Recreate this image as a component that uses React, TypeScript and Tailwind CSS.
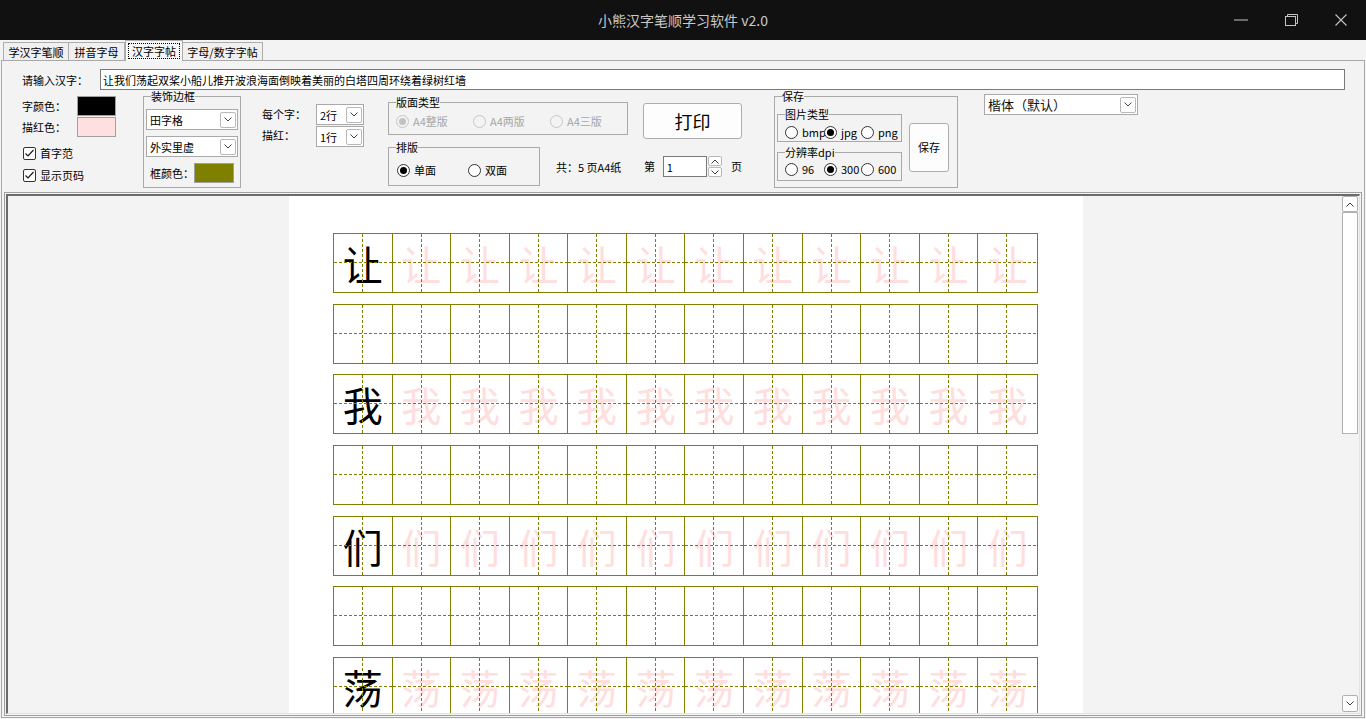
import React from "react";

const rows = ["让", "", "我", "", "们", "", "荡"];

const Chevron = ({ up = false }: { up?: boolean }) => (
  <svg width="8" height="5" viewBox="0 0 8 5" fill="none">
    <path d={up ? "M0.5 4.5 L4 1 L7.5 4.5" : "M0.5 0.5 L4 4 L7.5 0.5"} stroke="#404040" strokeWidth="1" />
  </svg>
);

const Select = ({ value, className, textClass = "" }: { value: string; className: string; textClass?: string }) => (
  <div className={`flex items-center bg-white border border-[#a9a9a9] pl-[3px] pr-[1px] ${className}`}>
    <span className={`flex-1 whitespace-nowrap leading-[14px] ${textClass}`}>{value}</span>
    <span className="w-[16px] h-[16px] flex items-center justify-center border border-[#b8b8b8] rounded-[2px] bg-white">
      <Chevron />
    </span>
  </div>
);

const Radio = ({ label, checked = false, disabled = false, className = "" }: { label: string; checked?: boolean; disabled?: boolean; className?: string }) => (
  <div className={`flex items-center h-[14px] ${className}`}>
    <span
      className={`w-[13px] h-[13px] shrink-0 rounded-full border flex items-center justify-center ${
        disabled ? "border-[#c6c6c6] bg-[#f3f3f3]" : "border-[#333333] bg-white"
      }`}
    >
      {checked && <span className={`w-[7px] h-[7px] rounded-full ${disabled ? "bg-[#c2c2c2]" : "bg-black"}`} />}
    </span>
    <span className={`ml-[4px] whitespace-nowrap leading-[14px] ${disabled ? "text-[#a6a6a6]" : ""}`}>{label}</span>
  </div>
);

const Check = ({ label }: { label: string }) => (
  <div className="flex items-center h-[16px]">
    <span className="ml-[1px] w-[13px] h-[13px] flex items-center justify-center border border-[#333333] rounded-[2px] bg-white">
      <svg width="11" height="11" viewBox="0 0 11 11" fill="none">
        <path d="M1.5 5.5 L4 8 L9.5 2" stroke="#1a1a1a" strokeWidth="1.2" />
      </svg>
    </span>
    <span className="ml-[4px] leading-[14px]">{label}</span>
  </div>
);

const Group = ({ title, className, children }: { title: string; className: string; children?: React.ReactNode }) => (
  <fieldset className={`border border-[#a9a9a9] ${className}`}>
    <legend className="ml-[7px] leading-[14px]">{title}</legend>
    {children}
  </fieldset>
);

const Cell = ({ ch, first }: { ch: string; first: boolean }) => (
  <div className="relative flex items-center justify-center border-r border-[#808000] last:border-r-0">
    {ch && (
      <span className={`text-[40px] leading-none ${first ? "text-black" : "text-[#ffdede]"}`}>{ch}</span>
    )}
    <div className="absolute left-0 right-0 top-[28px] h-px bg-[repeating-linear-gradient(90deg,#808000_0_3px,transparent_3px_5px)]" />
    <div className="absolute top-0 bottom-0 left-[28px] w-px bg-[repeating-linear-gradient(180deg,#808000_0_3px,transparent_3px_5px)]" />
  </div>
);

const GridRow = ({ ch }: { ch: string }) => (
  <div className="grid grid-cols-12 w-[705px] h-[60px] shrink-0 border border-[#808000]">
    {Array.from({ length: 12 }).map((_, i) => (
      <Cell key={i} ch={ch} first={i === 0} />
    ))}
  </div>
);

const TitleBar = () => (
  <div className="h-[40px] shrink-0 flex items-center bg-[#111111] text-[#c9c9c9]">
    <div className="w-[150px]" />
    <div className="flex-1 text-center text-[14px]">小熊汉字笔顺学习软件 v2.0</div>
    <div className="w-[150px] flex h-full">
      <div className="w-[50px] flex items-center justify-center">
        <svg width="14" height="2" viewBox="0 0 14 2"><path d="M0 1 H14" stroke="#c4c4c4" strokeWidth="1" /></svg>
      </div>
      <div className="w-[50px] flex items-center justify-center">
        <svg width="13" height="12" viewBox="0 0 13 12" fill="none">
          <rect x="0.5" y="2.5" width="10" height="9" stroke="#c4c4c4" />
          <path d="M2.5 2.5 V0.5 H12.5 V9.5 H10.5" stroke="#c4c4c4" />
        </svg>
      </div>
      <div className="w-[50px] flex items-center justify-center">
        <svg width="12" height="12" viewBox="0 0 12 12" fill="none">
          <path d="M0.5 0.5 L11.5 11.5 M11.5 0.5 L0.5 11.5" stroke="#c4c4c4" strokeWidth="1.1" />
        </svg>
      </div>
    </div>
  </div>
);

const Tabs = () => (
  <div className="h-[20px] shrink-0 flex items-end pl-[2px] relative z-10">
    <div className="w-[66px] h-[18px] border border-b-0 border-[#acacac] bg-[#f0f0f0] flex items-center justify-center leading-[14px]">学汉字笔顺</div>
    <div className="w-[56px] h-[18px] border border-l-0 border-b-0 border-[#acacac] bg-[#f0f0f0] flex items-center justify-center leading-[14px]">拼音字母</div>
    <div className="w-[58px] h-[21px] -mb-px border border-b-0 border-[#acacac] bg-[#f7f7f7] flex items-center justify-center">
      <span className="border border-dotted border-black px-[3px] leading-[14px]">汉字字帖</span>
    </div>
    <div className="w-[80px] h-[18px] border border-l-0 border-b-0 border-[#acacac] bg-[#f0f0f0] flex items-center justify-center leading-[14px]">字母/数字字帖</div>
  </div>
);

const Controls = () => (
  <div className="h-[131px] shrink-0 flex flex-col">
    <div className="flex items-center pt-[8px] pl-[20px] pr-[19px]">
      <span className="w-[78px] leading-[14px]">请输入汉字：</span>
      <div className="flex-1 h-[21px] bg-white border border-[#7a7a7a] flex items-center pl-[2px] leading-[14px]">
        让我们荡起双桨小船儿推开波浪海面倒映着美丽的白塔四周环绕着绿树红墙
      </div>
    </div>

    <div className="flex items-start -mt-[4px] pl-[20px]">
      {/* colours and checkboxes */}
      <div className="w-[94px] mt-[10px] flex flex-col">
        <div className="flex items-center h-[20px]">
          <span className="w-[55px]">字颜色：</span>
          <span className="w-[39px] h-[20px] bg-black border border-[#a0a0a0]" />
        </div>
        <div className="flex items-center h-[20px] mt-[1px]">
          <span className="w-[55px]">描红色：</span>
          <span className="w-[39px] h-[20px] bg-[#ffe0e0] border border-[#a0a0a0]" />
        </div>
        <div className="mt-[8px]"><Check label="首字范" /></div>
        <div className="mt-[6px]"><Check label="显示页码" /></div>
      </div>

      <Group title="装饰边框" className="ml-[27px] mt-[3px] w-[98px] h-[99px]">
        <div className="px-[2px] flex flex-col">
          <Select value="田字格" className="mt-[6px] w-[92px] h-[21px]" />
          <Select value="外实里虚" className="mt-[6px] w-[92px] h-[21px]" />
          <div className="mt-[6px] h-[20px] flex items-center">
            <span className="ml-[4px] w-[44px] shrink-0 whitespace-nowrap">框颜色：</span>
            <span className="w-[40px] h-[20px] shrink-0 bg-[#808000] border border-[#a0a0a0]" />
          </div>
        </div>
      </Group>

      <div className="ml-[21px] mt-[18px] flex flex-col">
        <div className="flex items-center">
          <span className="w-[54px]">每个字：</span>
          <Select value="2行" className="w-[48px] h-[21px]" />
        </div>
        <div className="flex items-start mt-[1px]">
          <span className="w-[54px] mt-[1px]">描红：</span>
          <Select value="1行" className="w-[48px] h-[21px]" />
        </div>
      </div>

      <div className="ml-[24px] mt-[9px] w-[240px] flex flex-col">
        <Group title="版面类型" className="w-[240px] h-[40px]">
          <div className="flex mt-[5px] pl-[7px]">
            <Radio label="A4整版" checked disabled className="w-[77px]" />
            <Radio label="A4两版" disabled className="w-[77px]" />
            <Radio label="A4三版" disabled />
          </div>
        </Group>
        <div className="flex items-start mt-[5px]">
          <Group title="排版" className="w-[152px] h-[46px]">
            <div className="flex mt-[9px] pl-[8px]">
              <Radio label="单面" checked className="w-[71px]" />
              <Radio label="双面" />
            </div>
          </Group>
          <span className="ml-[16px] mt-[20px] leading-[14px] whitespace-nowrap">共：5 页A4纸</span>
        </div>
      </div>

      <div className="ml-[15px] mt-[17px] w-[99px] flex flex-col">
        <div className="w-[99px] h-[36px] bg-[#fdfdfd] border border-[#adadad] rounded-[3px] flex items-center justify-center text-[18px]">
          打印
        </div>
        <div className="mt-[17px] h-[21px] flex items-center">
          <span className="ml-[1px] w-[19px]">第</span>
          <div className="w-[45px] h-[21px] bg-white border border-[#7a7a7a] flex items-center pl-[3px] leading-[14px]">1</div>
          <div className="ml-[1px] w-[14px] h-[21px] flex flex-col justify-between">
            <span className="h-[10px] flex items-center justify-center border border-[#b8b8b8] rounded-[2px] bg-white"><Chevron up /></span>
            <span className="h-[10px] flex items-center justify-center border border-[#b8b8b8] rounded-[2px] bg-white"><Chevron /></span>
          </div>
          <span className="ml-[9px]">页</span>
        </div>
      </div>

      <Group title="保存" className="ml-[32px] mt-[3px] w-[184px] h-[99px]">
        <div className="flex pl-[2px]">
          <div className="w-[125px] flex flex-col">
            <Group title="图片类型" className="mt-[4px] w-[125px] h-[35px]">
              <div className="flex mt-[4px] pl-[7px]">
                <Radio label="bmp" className="w-[39px]" />
                <Radio label="jpg" checked className="w-[37px]" />
                <Radio label="png" />
              </div>
            </Group>
            <Group title="分辨率dpi" className="mt-[3px] w-[125px] h-[36px]">
              <div className="flex mt-[3px] pl-[7px]">
                <Radio label="96" className="w-[39px]" />
                <Radio label="300" checked className="w-[37px]" />
                <Radio label="600" />
              </div>
            </Group>
          </div>
          <div className="ml-[7px] mt-[20px] w-[40px] h-[49px] bg-[#fdfdfd] border border-[#adadad] rounded-[3px] flex items-center justify-center">
            保存
          </div>
        </div>
      </Group>

      <Select
        value="楷体（默认）"
        className="ml-[26px] mt-[8px] w-[154px] h-[21px]"
        textClass="text-[13px] text-[#111111]"
      />
    </div>
  </div>
);

const Viewer = () => (
  <div className="flex-1 min-h-0 mx-[2px] mb-[1px] border border-[#a0a0a0] p-px flex">
    <div className="flex-1 flex border-t-2 border-l-2 border-[#6b6b6b] border-b border-r border-b-[#e3e3e3] border-r-[#e3e3e3] bg-[#f3f3f3] overflow-hidden">
      <div className="flex-1 min-w-0 overflow-hidden">
        <div className="ml-[281px] w-[794px] h-full bg-white overflow-hidden pt-[37px] pl-[44px] flex flex-col gap-[10.67px]">
          {rows.map((ch, i) => (
            <GridRow key={i} ch={ch} />
          ))}
        </div>
      </div>
      <div className="w-[17px] pr-px flex flex-col">
        <div className="h-[16px] flex items-center justify-center border border-[#b0b0b0] rounded-[2px] bg-white">
          <Chevron up />
        </div>
        <div className="h-[222px] border border-[#b0b0b0] bg-white" />
        <div className="mt-auto mb-[1px] h-[17px] flex items-center justify-center border border-[#b0b0b0] rounded-[2px] bg-white">
          <Chevron />
        </div>
      </div>
    </div>
  </div>
);

export default function App() {
  return (
    <div className="w-[1366px] h-[719px] overflow-hidden flex flex-col bg-[#f3f3f3] text-[11px] text-black font-['Noto_Sans_CJK_SC','Liberation_Sans',sans-serif]">
      <TitleBar />
      <div className="flex-1 min-h-0 flex flex-col px-px pb-px">
        <Tabs />
        <div className="flex-1 min-h-0 flex flex-col border border-[#a9a9a9] bg-[#f3f3f3]">
          <Controls />
          <Viewer />
        </div>
      </div>
    </div>
  );
}
